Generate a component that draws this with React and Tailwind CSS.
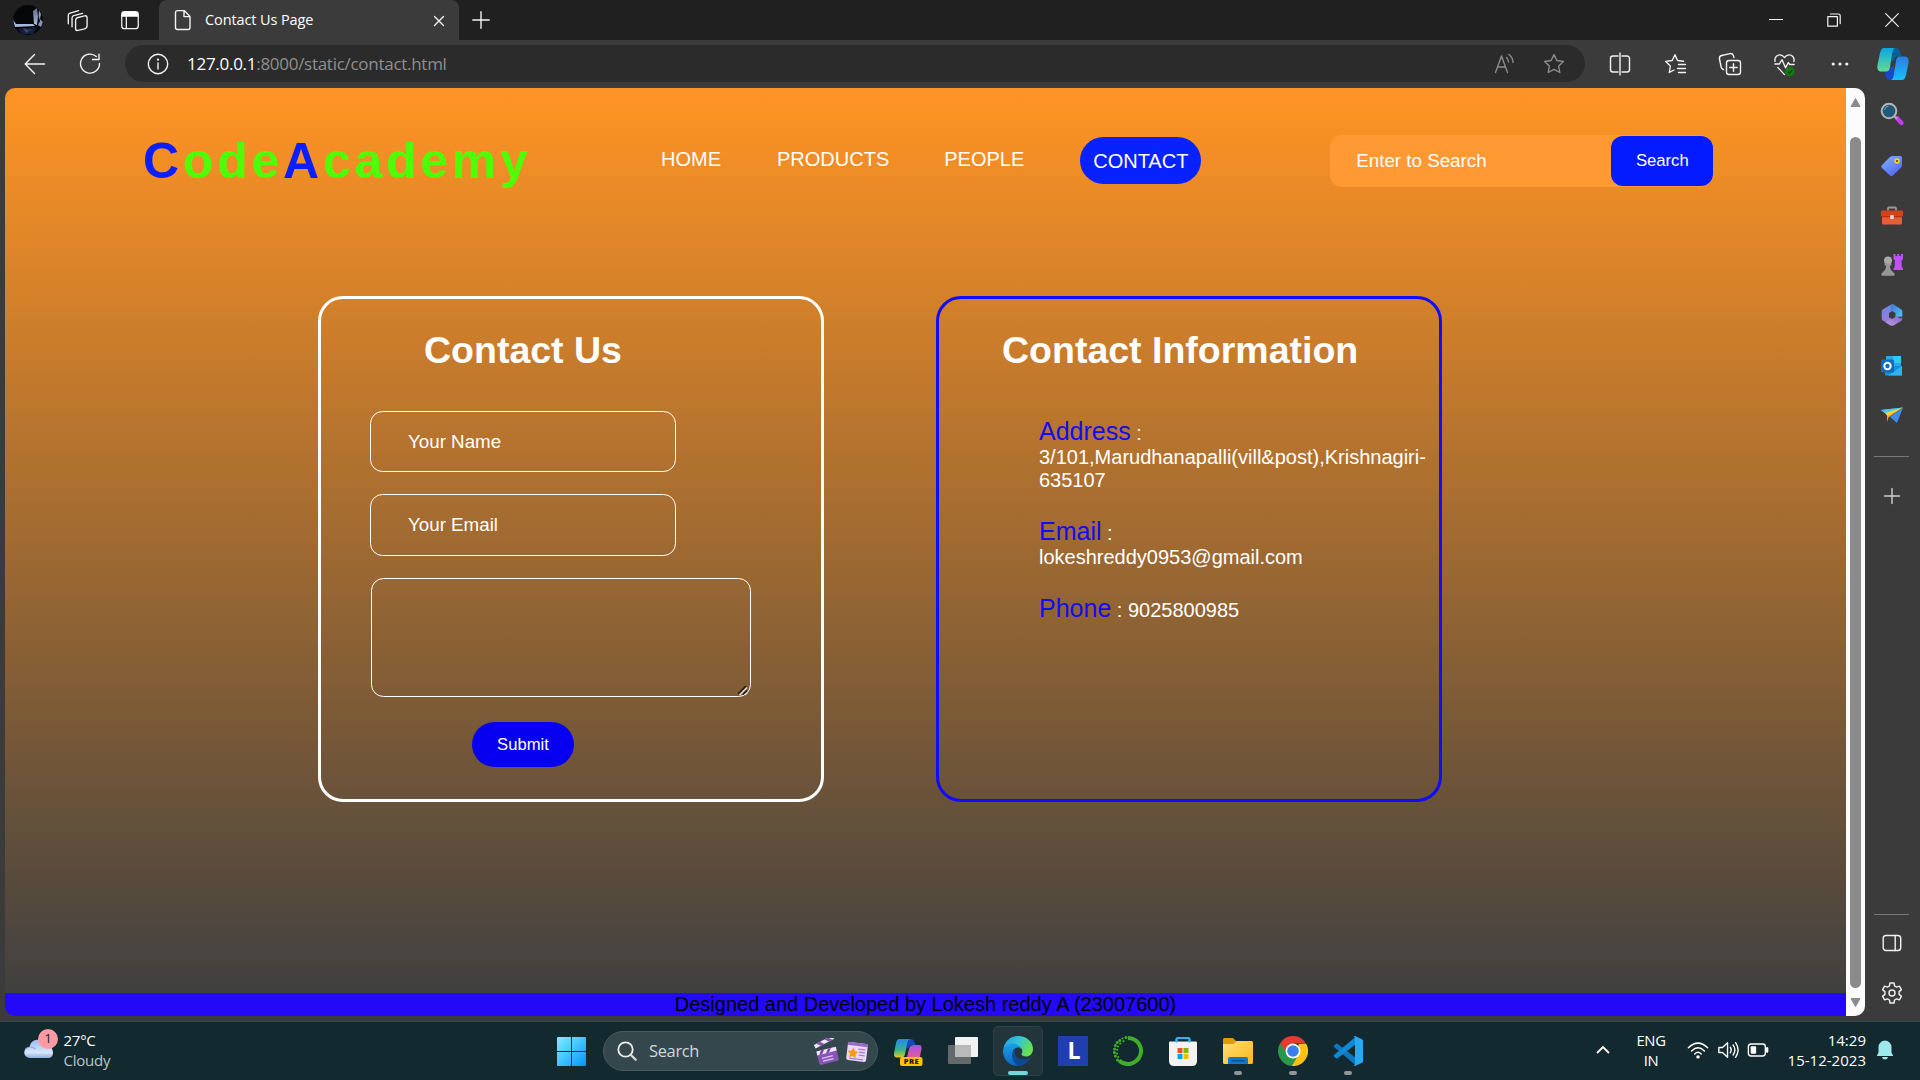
import React from "react";

const UI = "font-['Open_Sans','Noto_Sans',sans-serif]";

function Svg({ size = 24, vb = 24, children, className = "" }) {
  return (
    <svg width={size} height={size} viewBox={`0 0 ${vb} ${vb}`} fill="none" className={`block shrink-0 ${className}`}>
      {children}
    </svg>
  );
}

const line = { stroke: "#f2f2f2", strokeWidth: 1.4, strokeLinecap: "round", strokeLinejoin: "round" };
const dim = { ...line, stroke: "#8c8c8c" };

/* ---------- browser chrome ---------- */

function Avatar() {
  return (
    <Svg size={30} vb={30}>
      <defs>
        <clipPath id="av"><circle cx="15" cy="15" r="15" /></clipPath>
        <linearGradient id="avl" x1="0" y1="0" x2="0" y2="1">
          <stop offset="0" stopColor="#5b6b88" /><stop offset="1" stopColor="#a9b9d6" />
        </linearGradient>
      </defs>
      <g clipPath="url(#av)">
        <rect width="30" height="30" fill="#050608" />
        <path d="M0 15 L3 19 L20 19 L22 21 L2 22Z" fill="#a5b7dc" />
        <path d="M20 6 L24 3 L25 12 L24 20 L21 19Z" fill="url(#avl)" />
        <path d="M26 5 L28 9 L27 14 L30 17 L28 22 L25 20 L27 16 L25.500 11Z" fill="#8495b8" />
        <path d="M5 24 L24 22 L20 29 L9 29Z" fill="#14203a" />
        <path d="M10 23 l5 2 l4 -1 l-6 4z" fill="#33466e" />
      </g>
    </Svg>
  );
}

function TabStrip() {
  return (
    <div className="flex h-[40px] w-full items-center bg-[#202020]">
      <div className="ml-[13px] -mt-px"><Avatar /></div>
      <div className="ml-[23px]">
        <Svg size={23}>
          <g {...line}>
            <rect x="10" y="8" width="12" height="13.5" rx="2.6" transform="skewY(-14) translate(0 4)" />
            <path d="M6.3 18.5V9.3c0-1.2.7-2 1.8-2.3l9.2-2.5" />
            <path d="M2.4 15.5V6.6c0-1.3.7-2 1.8-2.3l9-2.5" />
          </g>
        </Svg>
      </div>
      <div className="ml-[30px]">
        <Svg size={22}>
          <rect x="3" y="3" width="18" height="18.5" rx="3" {...line} />
          <path d="M3 8.5V6a3 3 0 0 1 3-3h12a3 3 0 0 1 3 3v2.500Z" fill="#fff" />
          <path d="M8 8v13" {...line} />
        </Svg>
      </div>
      <div className="ml-[18px] flex h-[40px] w-[300px] items-center rounded-t-lg bg-[#3b3b3b]">
        <Svg size={24} className="ml-[12px]">
          <path d="M6.500 2.600h6.700l5.800 5.900v11a2 2 0 0 1-2 2h-10.500a2 2 0 0 1-2-2v-15a2 2 0 0 1 2-1.900ZM13 2.600v6h6" {...line} />
        </Svg>
        <span className={`${UI} ml-[10px] h-[20px] w-[200px] whitespace-nowrap text-[14.5px] leading-[19px] tracking-[-0.1px] text-white`}>Contact Us Page</span>
        <Svg size={12} vb={12} className="ml-[28px] mt-[1px]"><path d="M1.500 1.500l9 9M10.500 1.500l-9 9" {...line} /></Svg>
      </div>
      <Svg size={18} vb={18} className="ml-[13px]"><path d="M9 .8v16.400M.8 9h16.400" {...line} /></Svg>
      <div className="ml-auto mr-[21px] flex items-center gap-[44px]">
        <Svg size={14} vb={14}><path d="M.5 6.500h13" {...line} strokeWidth="1.200" /></Svg>
        <Svg size={14} vb={14}><path d="M.8 3.600h9.600v9.600H.8zM3.400 1h8a1.800 1.800 0 0 1 1.800 1.800v7.800" {...line} strokeWidth="1.200" /></Svg>
        <Svg size={14} vb={14}><path d="M.7.7l12.600 12.600M13.300.7L.7 13.300" {...line} strokeWidth="1.200" /></Svg>
      </div>
    </div>
  );
}

const STAR = "M12 2.600l2.900 5.900 6.500.95-4.700 4.600 1.100 6.450L12 17.450 6.200 20.500l1.100-6.450-4.700-4.600 6.500-.95Z";

function Tool({ children }) {
  return <div className="flex w-[55px] items-center justify-center">{children}</div>;
}

function CopilotLogo() {
  return (
    <Svg size={32} vb={32}>
      <defs>
        <linearGradient id="cp1" x1="0" y1="0" x2="0" y2="1"><stop offset="0" stopColor="#08a6e4" /><stop offset="1" stopColor="#62dc91" /></linearGradient>
        <linearGradient id="cp2" x1="0" y1="0" x2="0" y2="1"><stop offset="0" stopColor="#2a7be4" /><stop offset="1" stopColor="#18c0fb" /></linearGradient>
      </defs>
      <path d="M14 0h5q3 0 4 3l1.500 5.500h-5q-2 1-2.500 4l-4 2Z" fill="#0a5f94" />
      <path d="M18 32h-5q-3 0-4-3l-1.500-5.500h2q2-1 2.500-4l5-2Z" fill="#1747cb" />
      <path d="M7 0H18.500c-2 .5-2.800 2-3.200 4.500L13 19c-.5 3-1.500 4.500-4 4.500H4C1 23.500 0 21 .4 17.500L3 5C3.800 1.500 5 0 7 0Z" fill="url(#cp1)" />
      <path d="M25 32H13.500c2-.5 2.800-2 3.200-4.500L19 13c.5-3 1.500-4.500 4-4.500h5c3 0 4 2.500 3.600 6L29 27c-.8 3.500-2 5-4 5Z" fill="url(#cp2)" />
    </Svg>
  );
}

function Toolbar() {
  return (
    <div className="flex h-[48px] w-full items-center bg-[#3b3b3b]">
      <Svg size={24} className="ml-[23px] -mt-px"><path d="M21.500 12H2.500M11.500 2.500L2.200 12l9.300 9.500" {...line} /></Svg>
      <Svg size={24} className="ml-[31px]"><path d="M21.500 11.500a9.500 9.500 0 1 1-3.200-7M21 2.200v5.300h-6.500" {...line} /></Svg>
      <div className="ml-[23px] mb-[1px] flex h-[37px] w-[1460px] items-center rounded-full bg-[#2b2b2b]">
        <Svg size={24} className="ml-[21px]">
          <circle cx="12" cy="12" r="9.700" {...line} />
          <path d="M12 11v6" {...line} /><circle cx="12" cy="7.700" r="1.100" fill="#f2f2f2" />
        </Svg>
        <span className={`${UI} ml-[17px] whitespace-nowrap text-[17px] leading-[24px] tracking-[-0.28px] text-[#8f8f8f]`}>
          <span className="text-white">127.0.0.1</span>:8000/static/contact.html
        </span>
        <div className="ml-auto mr-[19px] flex items-center gap-[26px]">
          <Svg size={24}><path d="M3.500 20.500L9.500 4l6 16.500M5.600 15h7.800M14.500 5.500c1.300 1.200 2 2.700 2 4.500M17 2.500c2.700 2.200 4 4.700 4 8" {...dim} /></Svg>
          <Svg size={24}><path d={STAR} {...dim} /></Svg>
        </div>
      </div>
      <div className="ml-[7px] flex items-center">
        <Tool><Svg size={24}><path d="M10 4H5a2.500 2.500 0 0 0-2.500 2.500v11A2.500 2.500 0 0 0 5 20h5M14 4h5a2.500 2.500 0 0 1 2.500 2.500v11A2.500 2.500 0 0 1 19 20h-5M12 1v22" {...line} /></Svg></Tool>
        <Tool><Svg size={24}><path d="M20.500 9.300l-6-.8L12 2.700 9.200 8.500l-6.500.9 4.700 4.600-1.100 6.500 4.700-2.500M15.500 12.500h7M14.500 16.500h8M15.500 20.500h7" {...line} /></Svg></Tool>
        <Tool><Svg size={24}><rect x="8.500" y="8.500" width="14" height="14" rx="2.500" {...line} /><path d="M15.500 11.800v7.400M11.800 15.500h7.400M5.500 17.500a3 3 0 0 1-2.300-2.200L1.500 7a3 3 0 0 1 2.200-3.500l8.300-1.900a3 3 0 0 1 3.500 2.200l.4 1.700" {...line} /></Svg></Tool>
        <Tool>
          <Svg size={25} vb={26}>
            <path d="M3 12.500h4.500l3-4.500 3.500 8.500 3-5.500 1.500 2h4.500M3.300 9.800C2 6 5.500 2 9.500 3.200 11 3.700 12 4.500 13 5.800 14 4.500 15 3.700 16.500 3.200c4-1.200 7.500 2.800 6.200 6.800M6 16l7 7.500" {...line} />
            <circle cx="18.500" cy="20.500" r="5" fill="#107c10" /><path d="M16.500 20.500l1.500 1.500 3-3" stroke="#083c08" strokeWidth="1.200" />
          </Svg>
        </Tool>
        <Tool><Svg size={20} vb={20}><circle cx="3.200" cy="10" r="1.600" fill="#f2f2f2" /><circle cx="10" cy="10" r="1.600" fill="#f2f2f2" /><circle cx="16.800" cy="10" r="1.600" fill="#f2f2f2" /></Svg></Tool>
      </div>
      <div className="ml-[10px]"><CopilotLogo /></div>
    </div>
  );
}

/* ---------- web page ---------- */

function SiteHeader() {
  return (
    <header className="flex h-[144px] items-center text-white">
      <h1 className="ml-[138px] mt-[2px] h-[60px] w-[400px] whitespace-nowrap text-[50px] font-bold leading-[60px] tracking-[3.75px] text-[#4dff07]">
        <span className="text-[#0a1eff]">C</span>ode<span className="text-[#0a1eff]">A</span>cademy
      </h1>
      <nav className="-mt-[2px] ml-[118px] flex items-center text-[20px] leading-[24px]">
        <a>HOME</a>
        <a className="ml-[56px]">PRODUCTS</a>
        <a className="ml-[55px]">PEOPLE</a>
        <a className="ml-[56px] mt-[2px] flex h-[47px] w-[121px] items-center justify-center rounded-[25px] bg-[#0722ff] pt-[2px]">CONTACT</a>
      </nav>
      <div className="ml-[129px] mt-[2px] flex h-[52px] w-[383px] items-start rounded-[12px] bg-[#ff9933] pt-[1px]">
        <span className="ml-[26px] w-[255px] text-[18.75px] leading-[49px]">Enter to Search</span>
        <button className="h-[50px] w-[102px] rounded-[12px] bg-[#041bff] text-[16.67px] leading-[48px]">Search</button>
      </div>
    </header>
  );
}

function Field({ label, className }) {
  return (
    <div className={`w-[306px] rounded-[12.500px] border border-white pl-[37px] text-[18.75px] leading-[59px] ${className}`}>{label}</div>
  );
}

function FormCard() {
  return (
    <section className="h-[506px] w-[506px] rounded-[25px] border-[3px] border-white pl-[49px] text-white">
      <h2 className="ml-[54px] mt-[31px] text-[37.500px] font-bold leading-[41px]">Contact Us</h2>
      <Field label="Your Name" className="mt-[40px] h-[61px]" />
      <Field label="Your Email" className="mt-[22px] h-[62px]" />
      <div className="ml-px mt-[22px] flex h-[119px] w-[380px] items-end justify-end rounded-[12.500px] border border-white">
        <Svg size={12} vb={12} className="mr-[1px]">
          <path d="M1 10L9 2" stroke="#1c1712" strokeWidth="1.600" /><path d="M2.500 11L10 3.500" stroke="#ddd" strokeWidth="1.400" />
          <path d="M6 10.500L10 6.500" stroke="#1c1712" strokeWidth="1.300" /><path d="M8 11l2.500-2.500" stroke="#ddd" strokeWidth="1.300" />
        </Svg>
      </div>
      <button className="ml-[102px] mt-[25px] h-[45px] w-[102px] rounded-full bg-[#0700f0] text-[16.67px] leading-[44px]">Submit</button>
    </section>
  );
}

function InfoCard() {
  return (
    <section className="h-[506px] w-[506px] rounded-[25px] border-[3px] border-[#0f0cff] text-[20px] leading-[23px] text-white">
      <h2 className="ml-[63px] mt-[31px] text-[37.500px] font-bold leading-[41px]">Contact Information</h2>
      <div className="ml-[100px]">
        <p className="mt-[46px]"><span className="block h-[29px] leading-[28px]"><span className="text-[25px] text-[#120cf5]">Address</span> :</span>3/101,Marudhanapalli(vill&amp;post),Krishnagiri-<br />635107</p>
        <p className="mt-[25px]"><span className="block h-[29px] leading-[28px]"><span className="text-[25px] text-[#120cf5]">Email</span> :</span>lokeshreddy0953@gmail.com</p>
        <p className="mt-[25px] leading-[28px]"><span className="text-[25px] text-[#120cf5]">Phone</span> : 9025800985</p>
      </div>
    </section>
  );
}

function WebPage() {
  return (
    <div className="ml-[5px] flex h-[928px] w-[1860px] overflow-hidden rounded-[10px]">
      <div className="flex w-[1841px] flex-col bg-[linear-gradient(180deg,#fd9424_0px,#fb9224_25px,#404040_905px)] font-['Liberation_Sans',Arial,sans-serif]">
        <SiteHeader />
        <main className="flex h-[761px] items-start gap-[112px] pl-[313px] pt-[64px]">
          <FormCard />
          <InfoCard />
        </main>
        <footer className="h-[23px] bg-[#2408f8] text-center text-[20px] leading-[22px] text-black">Designed and Developed by Lokesh reddy A (23007600)</footer>
      </div>
      <div className="flex w-[19px] flex-col items-center bg-[#fcfcfc]">
        <Svg size={11} vb={11} className="mt-[9px]"><path d="M5.500 1.500L10 9.500H1Z" fill="#8b8b8b" stroke="#8b8b8b" strokeLinejoin="round" /></Svg>
        <div className="mt-[29px] h-[851px] w-[11px] rounded-full bg-[#8b8b8b]" />
        <Svg size={11} vb={11} className="mt-[9px]"><path d="M5.500 9.500L10 1.500H1Z" fill="#8b8b8b" stroke="#8b8b8b" strokeLinejoin="round" /></Svg>
      </div>
    </div>
  );
}

/* ---------- Edge side bar ---------- */

function SideBar() {
  return (
    <aside className="flex h-[933px] w-[55px] flex-col items-center bg-[#3b3b3b] pr-[2px] pt-[14px]">
      <Svg>
        <path d="M17 16l4.500 5" stroke="#c63bf5" strokeWidth="4.200" strokeLinecap="round" />
        <path d="M13 13l4 4" stroke="#aaa" strokeWidth="2" />
        <circle cx="9" cy="9" r="7.300" fill="#1f587a" stroke="#b5b5b5" strokeWidth="2" /><path d="M4.500 8a5 5 0 0 1 4-4" stroke="#61a9cd" />
      </Svg>
      <Svg className="mt-[28px]">
        <defs><linearGradient id="tag" x1="0" y1="0" x2=".7" y2="1"><stop stopColor="#7fb8f9" /><stop offset="1" stopColor="#5364f6" /></linearGradient></defs>
        <path d="M12.500 2h8q1.500 0 1.500 1.500v8q0 1-1 2L13 21.500q-1.500 1.300-3 0L2 14q-1.500-1.500 0-3l8-8q1-1 2.500-1Z" fill="url(#tag)" />
        <circle cx="17" cy="7" r="2.800" fill="#f6d21b" /><circle cx="17" cy="7" r="1.100" fill="#574b14" />
      </Svg>
      <Svg className="mt-[26px]">
        <path d="M8 6.500V4.500q0-1 1-1h6q1 0 1 1v2" stroke="#9c9c9c" strokeWidth="1.800" />
        <rect x="2" y="10" width="20" height="10.500" rx="1.500" fill="#e75d36" /><rect x="1" y="6.500" width="22" height="6" rx="1.200" fill="#d34218" />
        <path d="M2 12.700h20" stroke="#9d2d0f" /><rect x="10.200" y="11" width="3.600" height="4" rx="1" fill="#ddd" />
      </Svg>
      <Svg className="mt-[25px]">
        <path d="M13.500 1h2v2h1.700V1h2v2H21V1h2v5l-1.500 1.500.3 6.500 1.200 1.500V17h-9.500v-1.500l1-1.500.5-6.500L13.500 6Z" fill="#bd50f6" />
        <circle cx="8" cy="7.500" r="4" fill="#aaa" /><path d="M4.500 10.500h7v2H10c0 3 .5 4.500 2.500 6l2 2v1.500q0 .8-1 .8h-11q-1 0-1-.8v-1.500l2-2c2-1.500 2.500-3 2.500-6H4.500Z" fill="#979797" />
      </Svg>
      <Svg className="mt-[26px]">
        <defs>
          <linearGradient id="m3" x1="0" y1="0" x2="1" y2="1"><stop stopColor="#3f6fd0" /><stop offset="1" stopColor="#52c6f3" /></linearGradient>
          <linearGradient id="m4" x1="0" y1="0" x2="0" y2="1"><stop stopColor="#6a8ae0" /><stop offset="1" stopColor="#9a7bdc" /></linearGradient>
          <linearGradient id="m5" x1="1" y1="0" x2="0" y2="1"><stop stopColor="#7f63c4" /><stop offset="1" stopColor="#c29ae6" /></linearGradient>
        </defs>
        <path d="M12 1L3 6.200Q1.700 7 1.700 8.500v7q0 1.500 1.300 2.200l2.500 1.300q3.500 0 3.500-3V10l3-2Z" fill="url(#m4)" />
        <path d="M12 1q-1.500 1-1.500 3.500v4.700L12 8l3.500 2v4l6.800-.5v-5q0-1.500-1.300-2.300L13.500 1.300q-.7-.4-1.500-.3Z" fill="url(#m3)" />
        <path d="M22.300 13q0 2-1.500 2.500l-6.500-3.300L15.500 14 12 16l-3-1.500q-.3 3.700-4 4.500l5.500 3.400q1.500.9 3 0l7.500-4.500q1.300-.8 1.300-2.400Z" fill="url(#m5)" />
      </Svg>
      <Svg className="mt-[27px]">
        <path d="M6 2h15v12H6Z" fill="#28a8ea" /><path d="M13 2h8v7h-8Z" fill="#35c7fa" /><path d="M5 12h17v9.500H5Z" fill="#1490df" /><path d="M22 12v9.500H8L22 12Z" fill="#29b6f1" />
        <rect x="1" y="5.500" width="13" height="13" rx="1.200" fill="#0f6cbd" /><circle cx="7.500" cy="12" r="3.200" stroke="#fff" strokeWidth="2" />
      </Svg>
      <Svg className="mt-[25px]">
        <path d="M1 7L23 4.500 7 12Z" fill="#36b9f2" /><path d="M7 12L23 4.500 8.500 14.500 7 19Z" fill="#f2a71b" /><path d="M1 7l22-2.500L5 10Z" fill="#49c6f3" /><path d="M10 14L23 4.500 17 20Z" fill="#3a8de9" />
        <path d="M5 10L23 4.500 7.500 13Z" fill="#fdd137" />
      </Svg>
      <div className="mt-[29px] h-px w-[35px] bg-[#777]" />
      <Svg size={18} vb={18} className="mt-[30px]"><path d="M9 1.500v15M1.500 9h15" {...line} stroke="#cfcfcf" /></Svg>
      <div className="mt-auto h-px w-[35px] bg-[#777]" />
      <Svg size={20} vb={20} className="mt-[18px]"><rect x="1.200" y="2.500" width="17.500" height="15" rx="2.800" {...line} /><path d="M13.200 2.500v15" {...line} /></Svg>
      <Svg size={24} className="mt-[28px] mb-[16px]">
        <path d="M10 2h4l.6 3 1.900 1.100 2.900-1 2 3.500-2.300 2v2.800l2.300 2-2 3.500-2.900-1-1.900 1.100-.6 3h-4l-.6-3-1.900-1.100-2.900 1-2-3.500 2.300-2v-2.800l-2.300-2 2-3.500 2.900 1L9.400 5Z" {...line} /><circle cx="12" cy="12" r="3" {...line} />
      </Svg>
    </aside>
  );
}

/* ---------- Windows task bar ---------- */

function AppSlot({ children, active, open }) {
  return (
    <div className="flex w-[55px] justify-center">
      <div className={`relative flex h-[50px] w-[50px] items-center justify-center rounded-[5px] border ${active ? "border-[#2d4146] bg-[#21353b]" : "border-transparent"}`}>
        {children}
        {active && <span className="absolute bottom-0 left-[14px] h-[4px] w-[20px] rounded-full bg-[#76d5da]" />}
        {open && <span className="absolute bottom-0 left-[20px] h-[4px] w-[8px] rounded-full bg-[#8f9799]" />}
      </div>
    </div>
  );
}

function CopilotPre() {
  return (
    <Svg size={30} vb={30}>
      <defs>
        <linearGradient id="pa" x1="0" y1="0" x2="0" y2="1"><stop stopColor="#2487ee" /><stop offset=".6" stopColor="#36b58c" /><stop offset="1" stopColor="#e3cb1d" /></linearGradient>
        <linearGradient id="pb" x1="0" y1="0" x2="0" y2="1"><stop stopColor="#a355e8" /><stop offset="1" stopColor="#ee5a8b" /></linearGradient>
      </defs>
      <path d="M13 3h5q2.500 0 3.200 2.500L22.500 9h-4q-2 0-3 3l-2 1Z" fill="#1547bd" />
      <path d="M6.500 3H17q-2 .5-2.600 3.500L12 18q-.7 3.500-3.500 3.500H4Q.6 21.500 1 17.500L3 7q.8-4 3.500-4Z" fill="url(#pa)" />
      <path d="M20.500 9H26q3 0 2.500 4l-2 10H13.500L16 13q1-4 4.500-4Z" fill="url(#pb)" />
      <rect x="7" y="21" width="22.500" height="9" rx="2" fill="#ffc400" />
      <text x="18.400" y="28.300" textAnchor="middle" fontFamily="Open Sans, sans-serif" fontWeight="800" fontSize="7.600" fill="#1d1a08" letterSpacing=".4">PRE</text>
    </Svg>
  );
}

function EdgeLogo() {
  return (
    <Svg size={30} vb={30}>
      <defs>
        <linearGradient id="e1" x1="0" y1="0" x2="1" y2=".4"><stop stopColor="#1b9de2" /><stop offset=".55" stopColor="#36c6d3" /><stop offset="1" stopColor="#65e04e" /></linearGradient>
        <linearGradient id="e2" x1="0" y1="0" x2="0" y2="1"><stop stopColor="#1ba0e2" /><stop offset="1" stopColor="#0b66c8" /></linearGradient>
      </defs>
      <path d="M.3 14C1 6 7 0 15 0c9 0 15 6 15 13 0 5-3.500 7.500-7 7.500-3 0-5-1.300-4.500-2.500 2-3 .5-7-4-8.500C9 8 3 9 .3 14Z" fill="url(#e1)" />
      <path d="M0 15C1 10 5 7.500 9.500 7.500c6 0 9.500 3.500 9.500 8 0-3-2-4-4-4-3.500 0-5.500 3-5.500 7 0 6 5 10.500 9.500 10.500-10 3.500-19-4-19-14Z" fill="url(#e2)" />
      <path d="M12.500 12.500c-2 4.500 0 11 8 11 3 0 5.500-1 7.500-2.300C25.500 26 21 29.500 16 29.900 9 27.500 6.500 18 12.500 12.500Z" fill="#0c4b94" />
    </Svg>
  );
}

function Anaconda() {
  const dots = [[13, 1.5], [9.5, 2.5], [6.8, 4.6], [10.5, 5.2], [4.2, 6.5], [7.2, 7.5], [2.4, 9.5], [5, 10.5], [1.5, 13], [4.2, 13.8], [1.4, 16.5], [4, 17.5], [2.4, 20], [5.2, 21], [4.5, 24]];
  return (
    <Svg size={30} vb={30}>
      <path d="M15 2A13 13 0 1 1 6 24.400" stroke="#3fae2a" strokeWidth="4" />
      {dots.map(([x, y], i) => <circle key={i} cx={x} cy={y} r={i % 2 ? 1.1 : 1.5} fill="#3fae2a" />)}
    </Svg>
  );
}

function TaskBar() {
  return (
    <footer className={`${UI} flex h-[59px] w-full items-center border-t border-[#33494e] bg-[#12292f] text-white`}>
      <div className="relative -mt-[3px] ml-[24px] w-[29px]">
        <Svg size={30} vb={30}>
          <defs><linearGradient id="cl" x1="0" y1="0" x2="0" y2="1"><stop stopColor="#9dbcf2" /><stop offset=".7" stopColor="#d7e5fa" /><stop offset="1" stopColor="#90aede" /></linearGradient></defs>
          <path d="M6 23a5.500 5.500 0 0 1-.5-11A9 9 0 0 1 22 9c4 1 7 4.500 7 8.500S27 23 24 23Z" fill="url(#cl)" />
          <path d="M1.500 14q5-4 10 0" stroke="#88aae4" strokeWidth="1.200" />
        </Svg>
        <span className="absolute left-[14px] top-[-6px] flex h-[20px] w-[20px] items-center justify-center rounded-full bg-[#ff9aa4] text-[13.500px] leading-none text-[#222]">1</span>
      </div>
      <div className="-mt-[2px] ml-[10.500px] w-[119.500px] text-[15px] leading-[20px] tracking-[-0.25px]">
        <div>27°C</div><div className="text-[#bcc5c7]">Cloudy</div>
      </div>
      <div className="ml-[374px]">
        <Svg size={29} vb={29}>
          <defs><linearGradient id="w" gradientUnits="userSpaceOnUse" x1="0" y1="0" x2="29" y2="29"><stop stopColor="#7cf0ff" /><stop offset="1" stopColor="#0695f7" /></linearGradient></defs>
          <path d="M1 0h13v14H0V1q0-1 1-1ZM15 0h13q1 0 1 1v13H15ZM0 15h14v14H1q-1 0-1-1ZM15 15h14v13q0 1-1 1H15Z" fill="url(#w)" />
        </Svg>
      </div>
      <div className="ml-[17px] flex h-[40px] w-[275px] items-center rounded-full border border-[#465a5f] bg-[#33474c]">
        <Svg size={20} vb={20} className="-mt-px ml-[13px]"><circle cx="8.500" cy="8.500" r="7.200" stroke="#eee" strokeWidth="1.800" /><path d="M13.700 13.700l5 5" stroke="#ddd" strokeWidth="2.200" strokeLinecap="round" /></Svg>
        <span className="-mt-px ml-[12px] w-[166px] text-[16.400px] leading-[22px] tracking-[-0.3px] text-[#d2d8d9]">Search</span>
        <Svg size={27} vb={27} className="-ml-[1px]">
          <g transform="rotate(-14 13 15)"><rect x="3" y="11" width="20" height="14" rx="2" fill="#8755b7" /><path d="M3 11h20v4H3Z" fill="#f0e4fa" /><path d="M5 15l3-4h3l-3 4ZM12 15l3-4h3l-3 4Z" fill="#7b42ad" /><path d="M7 19h11M7 22h11" stroke="#ddc4ef" strokeWidth="1.300" /></g>
          <g transform="rotate(-28 3 11)"><rect x="2" y="6" width="21" height="4" fill="#f0e4fa" /><path d="M5 6h4l3 4H8ZM14 6h4l3 4h-4Z" fill="#8650b6" /></g>
        </Svg>
        <Svg size={24} vb={24} className="ml-[4px] mt-px">
          <g transform="rotate(7 12 12)"><rect x="2" y="3" width="20" height="18" rx="2" fill="#ead8f7" /><rect x="2" y="3" width="20" height="3" fill="#9969c7" /><path d="M13 9h7M14 12h6M14 15h6M5 19h14" stroke="#a780cb" strokeWidth="1.300" /><path d="M8 8l1.800 3.300 3.700.6-2.700 2.600.6 3.700L8 16.500l-3.300 1.700.6-3.700-2.700-2.600 3.700-.6Z" fill="#f79b16" /></g>
        </Svg>
      </div>
      <div className="-mt-px ml-[2.500px] flex">
        <AppSlot><CopilotPre /></AppSlot>
        <AppSlot>
          <Svg size={30} vb={30}><rect x="0" y="9" width="23" height="19" rx="1" fill="#66696a" /><rect x="7" y="1" width="23" height="20" rx="1" fill="#f2f2f2" /><rect x="7" y="9" width="16" height="12" fill="#b9bbbb" /></Svg>
        </AppSlot>
        <AppSlot active><EdgeLogo /></AppSlot>
        <AppSlot><div className="flex h-[30px] w-[30px] items-center justify-center bg-[#1f3fae] pl-[2px] font-['Open_Sans',sans-serif] text-[23px] font-bold leading-none text-white">L</div></AppSlot>
        <AppSlot><Anaconda /></AppSlot>
        <AppSlot>
          <Svg size={30} vb={30}>
            <path d="M8.500 7V3q0-1 1-1h11q1 0 1 1v4" stroke="#2bb6ee" strokeWidth="2" />
            <path d="M2 5.500h26q1 0 1 1V25q0 5-5 5H6q-5 0-5-5V6.500q0-1 1-1Z" fill="#f3f3f3" /><path d="M8.500 6.500V3M21.500 6.500V3" stroke="#2bb6ee" strokeWidth="2" />
            <rect x="9.500" y="12" width="5" height="5" fill="#f25022" /><rect x="15.500" y="12" width="5" height="5" fill="#7fba00" /><rect x="9.500" y="18" width="5" height="5" fill="#00a4ef" /><rect x="15.500" y="18" width="5" height="5" fill="#ffb900" />
          </Svg>
        </AppSlot>
        <AppSlot open>
          <Svg size={30} vb={30}>
            <defs><linearGradient id="fo" x1="0" y1="0" x2="1" y2="1"><stop stopColor="#ffdf7c" /><stop offset="1" stopColor="#f9b715" /></linearGradient></defs>
            <path d="M1.500 2H10l3 3h15v8H0V3.500Q0 2 1.500 2Z" fill="#e09a08" /><path d="M0 8h10.500l3-3H28.500Q30 5 30 6.500v20q0 1.500-1.500 1.500h-27Q0 28 0 26.500Z" fill="url(#fo)" />
            <path d="M5 28v-5q0-2 2-2h16q2 0 2 2v5Z" fill="#1178cc" /><path d="M9 24.700h12" stroke="#0a4f90" strokeWidth="1.400" strokeLinecap="round" />
          </Svg>
        </AppSlot>
        <AppSlot open>
          <Svg size={30} vb={30}>
            <path d="M2 7.500A15 15 0 0 0 14 30L21.500 18.500 15 15Z" fill="#279847" /><path d="M28 7.500A15 15 0 0 1 13.800 30L21 18 20.500 8Z" fill="#fbc116" /><path d="M2 7.500A15 15 0 0 1 28 7.500H15L9 17Z" fill="#e33b2e" />
            <circle cx="15" cy="15" r="7.500" fill="#fff" /><circle cx="15" cy="15" r="5.800" fill="#3b7ded" />
          </Svg>
        </AppSlot>
        <AppSlot open>
          <Svg size={30} vb={30}>
            <path d="M1 9.500l2-1.700q.8-.5 1.600 0L23 22v7.500L1 11Q.3 10.200 1 9.500Z" fill="#0d76bd" /><path d="M1 20.500l2 1.700q.8.500 1.600 0L23 8V.5L1 19Q.3 19.800 1 20.500Z" fill="#1388d2" />
            <path d="M22 0l7 3.200q1 .5 1 1.500v20.600q0 1-1 1.500L22 30q-1 0-1.500-1 1.500.5 1.500-1V2q0-1.500-1.500-1Q21 0 22 0Z" fill="#29a8f0" />
          </Svg>
        </AppSlot>
      </div>
      <div className="-mt-[2px] ml-auto flex items-center">
        <Svg size={16} vb={16}><path d="M2 11l6-6 6 6" stroke="#fff" strokeWidth="1.800" /></Svg>
        <div className="ml-[19px] w-[42px] text-center text-[14.800px] leading-[20px] tracking-[-0.3px]"><div>ENG</div><div>IN</div></div>
        <Svg size={22} className="ml-[15px]"><path d="M1.500 9.500q10.500-10 21 0M5 13q7-7 14 0M8.500 16.300q3.500-3.600 7 0" stroke="#fff" strokeWidth="1.600" strokeLinecap="round" /><circle cx="12" cy="19.500" r="1.900" fill="#fff" /></Svg>
        <Svg size={22} className="ml-[8px]"><path d="M2 9.300h4L11.500 4v16L6 14.700H2ZM14.500 9q2 3 0 6M17.500 6.500q4 5.500 0 11M20.300 4q5.500 8 0 16" stroke="#fff" strokeWidth="1.500" strokeLinejoin="round" strokeLinecap="round" /></Svg>
        <Svg size={22} className="ml-[8px]"><rect x="1.500" y="5.500" width="18.500" height="13" rx="3" stroke="#fff" strokeWidth="1.500" /><rect x="4" y="8" width="6" height="8" rx="1" fill="#fff" /><path d="M22 10v4" stroke="#fff" strokeWidth="2.500" strokeLinecap="round" /></Svg>
        <div className="ml-[16px] w-[81px] whitespace-nowrap text-right text-[15px] leading-[20px] tracking-[0.020px]"><div>14:29</div><div>15-12-2023</div></div>
        <Svg size={20} vb={20} className="ml-[9px] mr-[25px]"><path d="M2 15.500l1.500-3V7a6.500 6.500 0 0 1 13 0v5.500l1.500 3v.5H2Z" fill="#9fe8ec" /><path d="M7 17h6q-.5 2.500-3 2.500T7 17Z" fill="#9fe8ec" /></Svg>
      </div>
    </footer>
  );
}

export default function App() {
  return (
    <div className="flex h-[1080px] w-[1920px] flex-col overflow-hidden bg-[#3b3b3b]">
      <TabStrip />
      <Toolbar />
      <div className="flex h-[933px] w-full"><WebPage /><SideBar /></div>
      <TaskBar />
    </div>
  );
}
